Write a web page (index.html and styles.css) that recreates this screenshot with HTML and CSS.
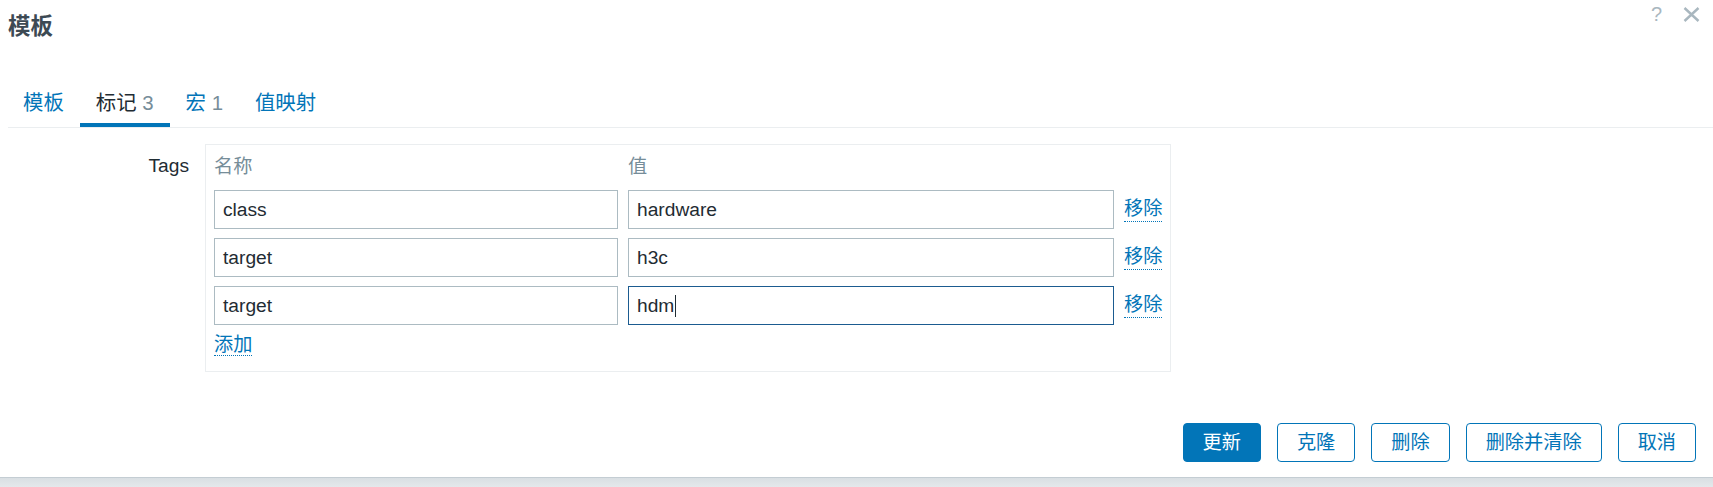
FILE: index.html
```html
<!DOCTYPE html>
<html lang="zh">
<head>
<meta charset="utf-8">
<title>模板</title>
<link rel="stylesheet" href="styles.css">
</head>
<body>
<div class="dialog">
  <div class="header">
    <h4 class="title">模板</h4>
    <div class="controls">
      <span class="help">?</span>
      <svg class="close" width="17" height="15" viewBox="0 0 17 15"><path d="M1.5 1 L15.5 14 M15.5 1 L1.5 14" stroke="#a9b7bf" stroke-width="2.4" fill="none"/></svg>
    </div>
  </div>
  <nav class="tabs">
    <a class="tab">模板</a>
    <a class="tab active">标记 <span class="count">3</span></a>
    <a class="tab">宏 <span class="count">1</span></a>
    <a class="tab">值映射</a>
  </nav>
  <div class="form-row">
    <div class="form-label">Tags</div>
    <div class="tags-box">
      <div class="tags-grid">
        <div class="th">名称</div>
        <div class="th">值</div>
        <div></div>
        <div class="field">class</div>
        <div class="field">hardware</div>
        <a class="link">移除</a>
        <div class="field">target</div>
        <div class="field">h3c</div>
        <a class="link">移除</a>
        <div class="field">target</div>
        <div class="field focus">hdm<span class="caret"></span></div>
        <a class="link">移除</a>
      </div>
      <div class="add-row"><a class="link">添加</a></div>
    </div>
  </div>
  <div class="buttons">
    <button class="btn primary">更新</button>
    <button class="btn">克隆</button>
    <button class="btn">删除</button>
    <button class="btn">删除并清除</button>
    <button class="btn">取消</button>
  </div>
</div>
<div class="bottom-band"></div>
</body>
</html>
```

FILE: styles.css
```css
* { box-sizing: border-box; }
html, body {
  margin: 0;
  padding: 0;
  background: #ffffff;
}
body {
  width: 1713px;
  height: 487px;
  overflow: hidden;
  display: flex;
  flex-direction: column;
  font-family: "Liberation Sans", "Noto Sans CJK SC", sans-serif;
  font-size: 19.2px;
  color: #1f2c33;
}
.dialog {
  height: 477px;
  display: flex;
  flex-direction: column;
}
.header {
  display: flex;
  align-items: flex-start;
  padding: 0 13px 0 8px;
  height: 80px;
}
.title {
  margin: 12px 0 0 0;
  font-size: 22.4px;
  line-height: 30px;
  font-weight: bold;
  color: #3d4a54;
}
.controls {
  margin-left: auto;
  display: flex;
  align-items: center;
  gap: 21px;
  margin-top: 5px;
  height: 18px;
}
.help {
  font-size: 20px;
  line-height: 18px;
  color: #a9b7bf;
}
.close { display: block; }
.tabs {
  display: flex;
  margin: 0 0 0 8px;
  border-bottom: 1px solid #ebeef0;
}
.tab {
  padding: 8px 16px 5px 16px;
  line-height: 30px;
  border-bottom: 4px solid transparent;
  color: #0275b8;
  font-size: 20.4px;
}
.tab:first-child { padding-left: 15px; }
.tab.active {
  color: #1f2c33;
  border-bottom-color: #0275b8;
}
.count { color: #768d99; }
.form-row {
  display: flex;
  align-items: flex-start;
  padding-left: 8px;
  margin-top: 16px;
}
.form-label {
  width: 181px;
  margin-right: 16px;
  text-align: right;
  padding-top: 7px;
  line-height: 30px;
}
.tags-box {
  border: 1px solid #ebeef0;
  padding: 6px 8px 13px 8px;
}
.tags-grid {
  display: grid;
  grid-template-columns: 404px 486px max-content;
  column-gap: 10px;
  row-gap: 9px;
  align-items: center;
}
.th {
  color: #768d99;
  line-height: 29px;
  padding-top: 1px;
}
.field {
  height: 39px;
  border: 1px solid #acbbc2;
  padding: 0 8px;
  line-height: 37px;
  color: #1f2c33;
  display: flex;
  align-items: center;
}
.field.focus { border-color: #1b5b90; }
.caret {
  display: inline-block;
  width: 1px;
  height: 22px;
  background: #1f2c33;
  margin-left: 1px;
}
.link {
  color: #0275b8;
  line-height: 24px;
  border-bottom: 1px dotted #0275b8;
  justify-self: start;
}
.add-row {
  margin-top: 7px;
  line-height: 26px;
}
.buttons {
  display: flex;
  justify-content: flex-end;
  gap: 16px;
  padding-right: 17px;
  margin-top: auto;
  margin-bottom: 15px;
}
.btn {
  height: 39px;
  padding: 0 19px;
  border: 1px solid #0275b8;
  border-radius: 4px;
  background: #ffffff;
  color: #0275b8;
  font-family: "Liberation Sans", "Noto Sans CJK SC", sans-serif;
  font-size: 19.2px;
  line-height: 37px;
}
.btn.primary {
  background: #0275b8;
  color: #ffffff;
}
.bottom-band {
  height: 10px;
  border-top: 1px solid #c4cdd3;
  background: linear-gradient(#d9dfe3, #e4e8eb);
}
```
